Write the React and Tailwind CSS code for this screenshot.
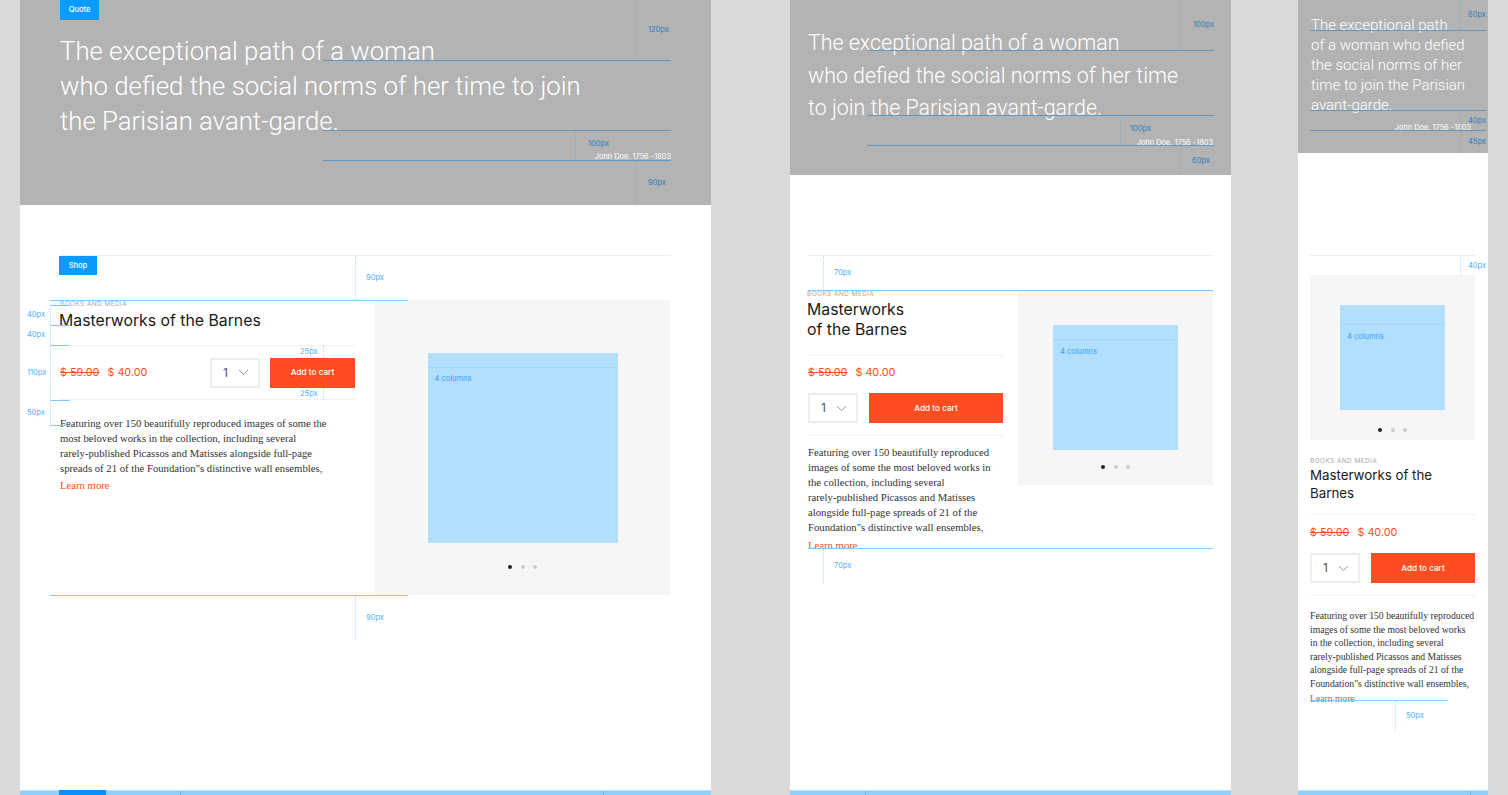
import React from "react";

const sans = "font-['Inter',sans-serif]";
const serif = "font-['Liberation_Serif',serif]";
const roboto = "font-['Roboto',sans-serif]";

const COPY_DESKTOP = [
  "Featuring over 150 beautifully reproduced images of some the",
  "most beloved works in the collection, including several",
  "rarely-published Picassos and Matisses alongside full-page",
  'spreads of 21 of the Foundation"s distinctive wall ensembles,',
];
const COPY_TABLET = [
  "Featuring over 150 beautifully reproduced",
  "images of some the most beloved works in",
  "the collection, including several",
  "rarely-published Picassos and Matisses",
  "alongside full-page spreads of 21 of the",
  'Foundation"s distinctive wall ensembles,',
];
const COPY_MOBILE = [
  "Featuring over 150 beautifully reproduced",
  "images of some the most beloved works",
  "in the collection, including several",
  "rarely-published Picassos and Matisses",
  "alongside full-page spreads of 21 of the",
  'Foundation"s distinctive wall ensembles,',
];

function Copy({ lines, className = "" }) {
  return (
    <p className={`whitespace-nowrap text-[#333333] ${serif} ${className}`}>
      {lines.map((line) => (
        <span key={line} className="block">
          {line}
        </span>
      ))}
    </p>
  );
}

// one measured gap of the redlines: dotted rule plus its px label
function Gap({ className = "", labelClass = "", hero = false, label }) {
  const tone = hero ? "text-[#2d7fbe]" : "text-[#4db2ff]";
  const rule = hero ? "border-[#8fa9bd]" : "border-[#b3dfff]";
  return (
    <div className={`flex items-center ${hero ? "border-[#5f98c4]" : "border-[#7fcbff]"} ${className}`}>
      <div className={`h-full w-0 border-l border-dotted ${rule}`} />
      <span className={`text-[7.5px] leading-[10px] ${sans} ${tone} ${labelClass}`}>{label}</span>
    </div>
  );
}

function GutterRow({ className = "", label }) {
  return (
    <div className={`flex ${className}`}>
      <span className={`flex w-[23px] items-center text-[7.5px] leading-[10px] text-[#4db2ff] ${sans}`}>{label}</span>
      <div className="w-[20px] border-l border-t border-l-[#d5eeff] border-t-[#7fcbff]" />
    </div>
  );
}

function Tag({ className = "", children }) {
  return (
    <div className={`flex items-center justify-center bg-[#0a9bff] text-[7.5px] font-medium text-white ${sans} ${className}`}>
      {children}
    </div>
  );
}

function Chevron() {
  return (
    <svg width="11" height="7" viewBox="0 0 11 7" fill="none" stroke="#9a9a9a" strokeWidth="1">
      <path d="M1 1l4.5 4.5L10 1" />
    </svg>
  );
}

function Price() {
  return (
    <div className={`flex gap-[8px] text-[10.8px] leading-[14px] text-[#ff4c21] ${sans}`}>
      <span className="line-through">$ 59.00</span>
      <span>$ 40.00</span>
    </div>
  );
}

function Qty() {
  return (
    <div className={`flex h-[30px] w-[50px] shrink-0 items-center justify-between border-2 border-[#eeeeee] bg-white pl-[11px] pr-[9px] text-[12px] text-[#555555] ${sans}`}>
      1
      <Chevron />
    </div>
  );
}

function Cart({ className = "" }) {
  return (
    <div className={`flex h-[30px] items-center justify-center bg-[#ff4c21] text-[8.2px] font-medium text-white ${sans} ${className}`}>
      Add to cart
    </div>
  );
}

function Dots({ className = "" }) {
  return (
    <div className={`flex gap-[8.5px] ${className}`}>
      <span className="h-[4px] w-[4px] rounded-full bg-[#222222]" />
      <span className="h-[4px] w-[4px] rounded-full bg-[#cccccc]" />
      <span className="h-[4px] w-[4px] rounded-full bg-[#cccccc]" />
    </div>
  );
}

function Placeholder({ className = "", lineClass = "", labelClass = "" }) {
  return (
    <div className={`bg-[#b3dfff] ${className}`}>
      <div className={`border-b border-dotted border-[#8fd0ff] ${lineClass}`} />
      <div className={`text-[7.5px] leading-[10px] text-[#2fa2f5] ${sans} ${labelClass}`}>4 columns</div>
    </div>
  );
}

function Eyebrow() {
  return (
    <div className={`text-[6.5px] leading-[8px] tracking-[0.4px] text-[#a8a8a8] ${sans}`}>
      BOOKS AND MEDIA
    </div>
  );
}

function Author({ className = "" }) {
  return (
    <div className={`text-right text-[7.4px] leading-[10px] text-white ${sans} ${className}`}>
      John Doe. 1756 -1803
    </div>
  );
}

function BottomBar({ children }) {
  return (
    <div className="absolute inset-x-0 top-[790px] flex h-[5px] border-t border-[#b5e0ff] bg-[#8fd0ff]">
      {children}
    </div>
  );
}

function Desktop() {
  return (
    <div className="relative h-[795px] w-[691px] shrink-0 overflow-hidden bg-white">
      <div className="flex h-[205px] flex-col bg-[#b3b3b3] px-[40px]">
        <Tag className="h-[20px] w-[39px]">Quote</Tag>
        <h1 className={`mt-[14px] text-[25.75px] leading-[35px] font-light text-white ${roboto}`}>
          The exceptional path of a woman
          <br />
          who defied the social norms of her time to join
          <br />
          the Parisian avant-garde.
        </h1>
        <Author className="mt-[13px]" />
      </div>

      <div className="mx-[40px] mt-[50px] h-[45px] border-t border-[#eeeeee]">
        <Tag className="ml-[-1px] h-[19px] w-[38px]">Shop</Tag>
      </div>
      <div className="mx-[40px] flex h-[295px] gap-[20px]">
        <div className="w-[295px] shrink-0">
          <Eyebrow />
          <h2 className={`ml-[-1px] h-[37px] text-[15.8px] leading-[26px] text-[#1a1a1a] ${sans}`}>
            Masterworks of the Barnes
          </h2>
          <div className="flex h-[55px] items-center justify-between border-y border-[#f0f0f0]">
            <Price />
            <div className="flex gap-[10px]">
              <Qty />
              <Cart className="w-[85px]" />
            </div>
          </div>
          <Copy lines={COPY_DESKTOP} className="mt-[16px] text-[10.7px] leading-[15px]" />
          <div className={`mt-[2px] text-[10.7px] leading-[15px] text-[#ff4c21] ${serif}`}>Learn more</div>
        </div>
        <div className="flex w-[295px] flex-col items-center bg-[#f6f6f6] pt-[53px]">
          <Placeholder className="h-[190px] w-[190px]" lineClass="h-[15px]" labelClass="ml-[7px] mt-[6px]" />
          <Dots className="mt-[22px]" />
        </div>
      </div>

      {/* redlines */}
      <div className="absolute left-[303px] top-0 flex w-[348px] flex-col">
        <Gap hero label="120px" className="h-[61px] gap-[12px] border-b pl-[312px]" />
        <div className="h-[69px]" />
        <Gap hero label="100px" labelClass="mb-[4px]" className="h-[31px] gap-[12px] border-y pl-[252px]" />
        <Gap hero label="90px" className="h-[44px] gap-[12px] pl-[312px]" />
      </div>
      <div className="absolute left-[30px] top-[256px] flex w-[358px] flex-col">
        <Gap label="90px" className="h-[45px] gap-[10px] border-b pl-[305px]" />
        <div className="h-[294px]" />
        <Gap label="90px" className="h-[45px] gap-[10px] border-t pl-[305px]" />
      </div>
      <div className="absolute left-[7px] top-[305px] flex w-[43px] flex-col">
        <GutterRow label="40px" className="h-[20px]" />
        <GutterRow label="40px" className="h-[20px]" />
        <GutterRow label="110px" className="h-[55px]" />
        <GutterRow label="50px" className="h-[25px]" />
        <div className="ml-[23px] h-px w-[20px] bg-[#7fcbff]" />
      </div>
      <div className="absolute left-[280px] top-[346px] flex flex-col">
        <Gap label="25px" className="h-[12px] flex-row-reverse justify-end gap-[5px]" />
        <div className="h-[30px]" />
        <Gap label="25px" className="h-[12px] flex-row-reverse justify-end gap-[5px]" />
      </div>

      <BottomBar>
        <div className="w-[39px]" />
        <div className="mt-[-1px] h-[5px] w-[47px] bg-[#0a8fff]" />
        <div className="w-[74px]" />
        <div className="w-px bg-[#6fb8ea]" />
        <div className="w-[422px]" />
        <div className="w-px bg-[#6fb8ea]" />
      </BottomBar>
    </div>
  );
}

function Tablet() {
  return (
    <div className="relative h-[795px] w-[441px] shrink-0 overflow-hidden bg-white">
      <div className="flex h-[175px] flex-col bg-[#b3b3b3] px-[18px] pt-[27px]">
        <h1 className={`text-[21.4px] leading-[32.5px] font-light text-white ${roboto}`}>
          The exceptional path of a woman
          <br />
          who defied the social norms of her time
          <br />
          to join the Parisian avant-garde.
        </h1>
        <Author className="mt-[13px]" />
      </div>

      <div className="mx-[18px] mt-[80px] h-[35px] border-t border-[#eeeeee]" />
      <div className="mx-[18px] flex gap-[15px]">
        <div className="w-[195px] shrink-0">
          <div className="ml-[-1px]">
            <Eyebrow />
          </div>
          <h2 className={`ml-[-1px] mt-[2px] h-[55px] text-[15.8px] leading-[20px] text-[#1a1a1a] ${sans}`}>
            Masterworks
            <br />
            of the Barnes
          </h2>
          <div className="border-y border-[#f0f0f0] pb-[12px] pt-[10px]">
            <Price />
            <div className="mt-[13px] flex gap-[11px]">
              <Qty />
              <Cart className="flex-1" />
            </div>
          </div>
          <Copy lines={COPY_TABLET} className="mt-[9px] text-[10.7px] leading-[15px]" />
          <div className={`mt-[3px] text-[10.7px] leading-[15px] text-[#ff4c21] ${serif}`}>Learn more</div>
        </div>
        <div className="flex h-[195px] w-[195px] flex-col items-center bg-[#f6f6f6] pt-[35px]">
          <Placeholder className="h-[125px] w-[125px]" lineClass="h-[15px]" labelClass="ml-[7px] mt-[7px]" />
          <Dots className="mt-[15px]" />
        </div>
      </div>

      {/* redlines */}
      <div className="absolute left-[77px] top-0 flex w-[347px] flex-col">
        <Gap hero label="100px" className="h-[51px] gap-[12px] border-b pl-[313px]" />
        <div className="h-[64px]" />
        <Gap hero label="100px" labelClass="mb-[4px]" className="h-[31px] gap-[9px] border-y pl-[253px]" />
        <Gap hero label="60px" className="h-[29px] gap-[11px] pl-[313px]" />
      </div>
      <div className="absolute left-[18px] top-[256px] flex w-[405px] flex-col">
        <Gap label="70px" className="h-[35px] gap-[10px] border-b pl-[15px]" />
        <div className="h-[257px]" />
        <Gap label="70px" className="h-[35px] gap-[10px] border-t pl-[15px]" />
      </div>

      <BottomBar>
        <div className="w-[75px]" />
        <div className="w-px bg-[#6fb8ea]" />
      </BottomBar>
    </div>
  );
}

function Mobile() {
  return (
    <div className="relative h-[795px] w-[190px] shrink-0 overflow-hidden bg-white">
      <div className="flex h-[153px] flex-col bg-[#b3b3b3] pl-[13px] pr-[17px] pt-[15px]">
        <h1 className={`whitespace-nowrap text-[15px] leading-[20px] font-light text-white ${roboto}`}>
          The exceptional path
          <br />
          of a woman who defied
          <br />
          the social norms of her
          <br />
          time to join the Parisian
          <br />
          avant-garde.
        </h1>
        <Author className="mt-[8px]" />
      </div>

      <div className="mx-[12px] mt-[102px] h-[20px] border-t border-[#eeeeee]" />
      <div className="mx-[12px] w-[165px]">
        <div className="flex h-[165px] flex-col items-center bg-[#f6f6f6] pt-[30px]">
          <Placeholder className="h-[105px] w-[105px]" lineClass="h-[20px]" labelClass="ml-[7px] mt-[7px]" />
          <Dots className="mt-[18px]" />
        </div>
        <div className="mt-[17px]">
          <Eyebrow />
        </div>
        <h2 className={`mt-[2px] h-[47px] text-[13.3px] leading-[17.5px] text-[#1a1a1a] ${sans}`}>
          Masterworks of the Barnes
        </h2>
        <div className="border-y border-[#f0f0f0] pb-[12px] pt-[11px]">
          <Price />
          <div className="mt-[13px] flex gap-[11px]">
            <Qty />
            <Cart className="flex-1" />
          </div>
        </div>
        <Copy lines={COPY_MOBILE} className="mt-[13px] text-[9.7px] leading-[13.5px]" />
        <div className={`mt-[2px] text-[9.7px] leading-[13.5px] text-[#ff4c21] ${serif}`}>Learn more</div>
      </div>

      {/* redlines */}
      <div className="absolute left-[12px] top-0 flex w-[176px] flex-col">
        <Gap hero label="60px" className="h-[31px] gap-[7px] border-b pl-[150px]" />
        <div className="h-[79px]" />
        <Gap hero label="40px" className="h-[21px] gap-[7px] border-y pl-[150px]" />
        <Gap hero label="45px" className="h-[22px] gap-[7px] pl-[150px]" />
      </div>
      <div className="absolute left-[162px] top-[256px]">
        <Gap label="40px" className="h-[19px] gap-[7px]" />
      </div>
      <div className="absolute left-[12px] top-[700px] w-[138px]">
        <Gap label="50px" className="h-[31px] gap-[10px] border-t pl-[85px]" />
      </div>

      <BottomBar>
        <div className="w-[172px]" />
        <div className="w-px bg-[#6fb8ea]" />
      </BottomBar>
    </div>
  );
}

export default function App() {
  return (
    <div className="flex h-[795px] w-[1508px] overflow-hidden bg-[#dadada] pl-[20px]">
      <Desktop />
      <div className="ml-[79px]">
        <Tablet />
      </div>
      <div className="ml-[67px]">
        <Mobile />
      </div>
    </div>
  );
}
